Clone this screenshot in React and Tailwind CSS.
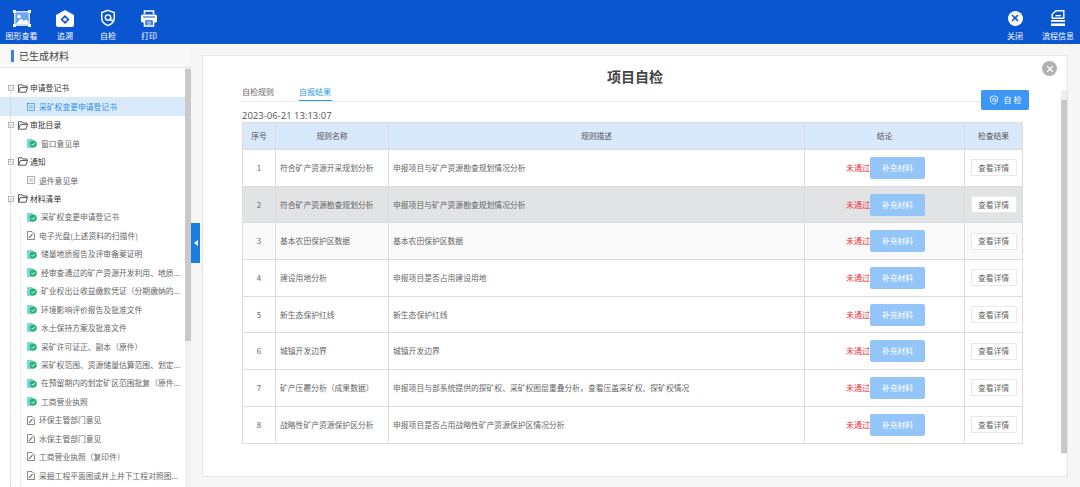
import React from 'react'
import { X } from 'lucide-react'

const FONT = 'font-["Noto_Sans_CJK_SC","Noto_Sans",sans-serif]'

const ShieldIcon = ({ className }) => (
  <svg viewBox="0 0 20 20" className={className} fill="none" stroke="currentColor" strokeWidth="1.6">
    <path d="M10 1.5 L17 4 V10 C17 14 13.5 17 10 18.5 C6.5 17 3 14 3 10 V4 Z" />
    <circle cx="10" cy="9.5" r="3" />
    <path d="M13 9.5 V12 C13 13 14.5 13 15.5 12" />
  </svg>
)

const ImageIcon = () => (
  <svg viewBox="0 0 18 17" className="w-[18px] h-[17px]" fill="none">
    <rect x="1" y="1" width="16" height="15" fill="#cfe1fa" />
    <rect x="2.5" y="2.5" width="13" height="12" fill="#6fa5ee" />
    <circle cx="6" cy="6.5" r="1.8" fill="#fff" />
    <path d="M2.5 14.5 L8 8.5 L11 11 L13 9.5 L15.5 12 V14.5 Z" fill="#fff" />
    <path d="M0 0h3v3h-3zM15 0h3v3h-3zM0 14h3v3h-3zM15 14h3v3h-3z" fill="#fff" />
  </svg>
)

const TraceIcon = () => (
  <svg viewBox="0 0 18 17" className="w-[18px] h-[17px]">
    <path d="M9 0 L18 5 V15 C18 16 17 17 16 17 H2 C1 17 0 16 0 15 V5 Z" fill="#fff" />
    <path d="M9 5 L13.5 9.5 L9 14 L4.5 9.5 Z" fill="#0a55d0" />
    <circle cx="9" cy="9.5" r="1.8" fill="#fff" />
  </svg>
)

const PrintIcon = () => (
  <svg viewBox="0 0 18 17" className="w-[18px] h-[17px]" fill="none" stroke="#fff" strokeWidth="1.6">
    <path d="M4.5 4 V1 H13.5 V4" />
    <rect x="1" y="4.5" width="16" height="8" rx="1.5" fill="#fff" stroke="none" />
    <path d="M3 7 H15" stroke="#0a55d0" strokeWidth="1" />
    <rect x="4.5" y="9.5" width="9" height="6.5" fill="#0a55d0" />
    <path d="M6.5 12 H11.5 M6.5 14 H11.5" strokeWidth="1" />
  </svg>
)

const FlowIcon = () => (
  <svg viewBox="0 0 14 16" className="w-[14px] h-[16px]">
    <path d="M5 0.7 H12.8 V8.3 H1.2 V4.2 Z" fill="none" stroke="#fff" strokeWidth="1.4" />
    <path d="M4.5 5 H10 V6.3 H4.5 Z" fill="#fff" />
    <rect x="0" y="10" width="14" height="1.8" fill="#fff" />
    <rect x="0" y="13.4" width="14" height="2.6" fill="#fff" />
  </svg>
)

const ToolItem = ({ icon, label, className }) => (
  <div className={`flex flex-col items-center ${className}`}>
    <div className="h-[18px] flex items-center justify-center">{icon}</div>
    <span className="text-[8px] leading-[11px] mt-[3px] whitespace-nowrap">{label}</span>
  </div>
)

const FolderIcon = () => (
  <svg viewBox="0 0 10 9" className="w-[10px] h-[9px] shrink-0" fill="none" stroke="#444" strokeWidth="0.9">
    <path d="M0.5 8.2 V0.8 H4 L5 2 H9 V3.6 M0.5 8.2 L2.2 3.6 H9.5 L8 8.2 Z" />
  </svg>
)

const MinusBox = () => (
  <svg viewBox="0 0 6 6" className="w-[6px] h-[6px] shrink-0" fill="none" stroke="#999" strokeWidth="0.7">
    <rect x="0.4" y="0.4" width="5.2" height="5.2" />
    <path d="M1.5 3 H4.5" />
  </svg>
)

const CheckDoc = () => (
  <svg viewBox="0 0 10 9" className="w-[10px] h-[9px] shrink-0">
    <path d="M0 0 H5 L7 2 V9 H0 Z" fill="#7fd6dd" />
    <circle cx="6.2" cy="5" r="3.6" fill="#22b573" />
    <path d="M4.5 5 L5.8 6.3 L8 3.9" fill="none" stroke="#fff" strokeWidth="0.9" />
  </svg>
)

const EditDoc = () => (
  <svg viewBox="0 0 8 9" className="w-[8px] h-[9px] shrink-0" fill="none" stroke="#555" strokeWidth="0.7">
    <path d="M0.5 0.5 H5 L7.5 3 V8.5 H0.5 Z" />
    <path d="M2 7 L5.5 3" strokeWidth="1.1" />
  </svg>
)

const PlainDoc = ({ color }) => (
  <svg viewBox="0 0 8 8" className="w-[8px] h-[8px] shrink-0" fill="none" stroke={color} strokeWidth="0.7">
    <rect x="0.5" y="0.5" width="7" height="7" />
    <path d="M2 3 H6 M2 5 H6" />
  </svg>
)

const tree = [
  { root: '申请登记书' },
  { label: '采矿权变更申请登记书', icon: 'sel', selected: true },
  { root: '审批目录' },
  { label: '窗口意见单', icon: 'check' },
  { root: '通知' },
  { label: '退件意见单', icon: 'plain' },
  { root: '材料清单' },
  { label: '采矿权变更申请登记书', icon: 'check' },
  { label: '电子光盘(上述资料的扫描件)', icon: 'edit' },
  { label: '储量地质报告及评审备案证明', icon: 'check' },
  { label: '经审查通过的矿产资源开发利用、地质...', icon: 'check' },
  { label: '矿业权出让收益缴款凭证（分期缴纳的...', icon: 'check' },
  { label: '环境影响评价报告及批准文件', icon: 'check' },
  { label: '水土保持方案及批准文件', icon: 'check' },
  { label: '采矿许可证正、副本（原件）', icon: 'check' },
  { label: '采矿权范围、资源储量估算范围、划定...', icon: 'check' },
  { label: '在预留期内的划定矿区范围批复（原件...', icon: 'check' },
  { label: '工商营业执照', icon: 'check' },
  { label: '环保主管部门意见', icon: 'edit' },
  { label: '水保主管部门意见', icon: 'edit' },
  { label: '工商营业执照（复印件）', icon: 'edit' },
  { label: '采掘工程平面图或井上井下工程对照图...', icon: 'edit' },
]

const TreeRow = ({ item }) => {
  if (item.root) {
    return (
      <div className="h-[18.45px] flex items-center pl-[8px] text-[#333]">
        <MinusBox />
        <span className="ml-[4px]"><FolderIcon /></span>
        <span className="ml-[2px]">{item.root}</span>
      </div>
    )
  }
  return (
    <div className={`h-[18.45px] flex items-center pl-[27px] whitespace-nowrap ${item.selected ? 'bg-[#d9ebfa] text-[#2f8fe6]' : 'text-[#666]'}`}>
      {item.icon === 'check' && <CheckDoc />}
      {item.icon === 'edit' && <EditDoc />}
      {item.icon === 'plain' && <PlainDoc color="#888" />}
      {item.icon === 'sel' && <PlainDoc color="#2f8fe6" />}
      <span className="ml-[4px]">{item.label}</span>
    </div>
  )
}

const rows = [
  ['符合矿产资源开采规划分析', '申报项目与矿产资源勘查规划情况分析'],
  ['符合矿产资源勘查规划分析', '申报项目与矿产资源勘查规划情况分析'],
  ['基本农田保护区数据', '基本农田保护区数据'],
  ['建设用地分析', '申报项目是否占用建设用地'],
  ['新生态保护红线', '新生态保护红线'],
  ['城镇开发边界', '城镇开发边界'],
  ['矿产压覆分析（成果数据）', '申报项目与部系统提供的探矿权、采矿权图层重叠分析，查看压盖采矿权、探矿权情况'],
  ['战略性矿产资源保护区分析', '申报项目是否占用战略性矿产资源保护区情况分析'],
]

const rowBg = (i) => {
  if (i === 1) return 'bg-[#e2e3e5]'
  if (i === 2) return 'bg-[#fafafa]'
  return 'bg-white'
}

const App = () => {
  return (
    <div className={`w-[1080px] h-[487px] overflow-hidden flex flex-col bg-[#f6f6f6] ${FONT}`}>
      {/* top bar */}
      <header className="h-[44px] shrink-0 bg-[#0a55d0] text-white flex items-start pt-[9px]">
        <ToolItem icon={<ImageIcon />} label="图形查看" className="w-[31px] ml-[6px]" />
        <ToolItem icon={<TraceIcon />} label="追溯" className="w-[18px] ml-[19px]" />
        <ToolItem icon={<ShieldIcon className="w-[18px] h-[18px]" />} label="自检" className="w-[18px] ml-[25px]" />
        <ToolItem icon={<PrintIcon />} label="打印" className="w-[18px] ml-[23px]" />
        <ToolItem
          icon={<div className="w-[15px] h-[15px] rounded-full bg-white flex items-center justify-center"><X className="w-[10px] h-[10px] text-[#0a55d0]" strokeWidth={4} /></div>}
          label="关闭"
          className="w-[16px] ml-auto"
        />
        <ToolItem icon={<FlowIcon />} label="流程信息" className="w-[32px] ml-[19px] mr-[6px]" />
      </header>

      <div className="flex-1 flex min-h-0 relative">
        {/* left panel */}
        <aside className="w-[191px] shrink-0 flex flex-col bg-white text-[7.8px]">
          <div className="h-[24px] shrink-0 flex items-center pl-[11px] bg-[#f8f8f8] border-b border-[#e6e6e6]">
            <span className="w-[3px] h-[12px] bg-[#2a86e0]" />
            <span className="ml-[5px] text-[10px] text-[#444]">已生成材料</span>
          </div>
          <div className="flex-1 flex min-h-0">
            <div className="w-[185px] pt-[11px] overflow-hidden relative">
              {tree.map((item, i) => <TreeRow item={item} key={i} />)}
              <div className="absolute left-[10px] top-[24px] bottom-0 border-l border-dotted border-[#ccc]" />
              <div className="absolute left-[20px] top-[150px] bottom-0 border-l border-dotted border-[#ddd]" />
            </div>
            <div className="w-[6px] bg-[#f1f1f1]">
              <div className="h-[272px] mt-[1px] bg-[#c9c9c9]" />
            </div>
          </div>
        </aside>

        {/* collapse handle */}
        <button className="w-[9px] h-[40px] self-start mt-[179px] bg-[#1a7fe0] flex items-center justify-center shrink-0">
          <svg viewBox="0 0 4 6" className="w-[4px] h-[6px]" fill="#fff"><path d="M4 0 V6 L0 3 Z" /></svg>
        </button>

        {/* main panel */}
        <main className="relative w-[866px] h-[422px] ml-[2px] mt-[11px] bg-white border border-[#e6e6e6] pl-[39px]">
          <h1 className="absolute left-0 right-0 top-[10px] text-center text-[14px] leading-[20px] font-bold text-[#444]">项目自检</h1>
          <button className="absolute right-[10px] top-[5px] w-[15px] h-[15px] rounded-full bg-[#b0b0b0] flex items-center justify-center">
            <X className="w-[10px] h-[10px] text-white" strokeWidth={3} />
          </button>
          <button className="absolute left-[778px] top-[34px] w-[48px] h-[20px] rounded-[2px] bg-[#3b96f5] text-white text-[8px] flex items-center justify-center gap-[5px]">
            <ShieldIcon className="w-[10px] h-[10px]" />
            <span>自 检</span>
          </button>
          <div className="absolute right-0 top-[34px] bottom-[22px] w-[6px] bg-[#eeeeee]">
            <div className="mt-[10px] h-[353px] bg-[#c9c9c9]" />
          </div>

          {/* tabs */}
          <div className="w-[739px] h-[46px] pt-[28px] flex items-start border-b border-[#e8e8e8] text-[8px] text-[#666]">
            <span className="w-[57px] leading-[16px]">自检规则</span>
            <span className="w-[33px] h-[17px] leading-[16px] text-[#2b9bd8] border-b border-[#2b9bd8]">自报结果</span>
          </div>
          <div className="h-[20px] text-[9.5px] leading-[28px] text-[#555] font-['Open_Sans',sans-serif]">2023-06-21 13:13:07</div>

          {/* result table */}
          <table className="w-[780px] table-fixed border-collapse text-[7.8px] text-[#666]">
            <thead>
              <tr className="h-[27px] bg-[#d8e9fb] text-[#555]">
                <th className="w-[33px] border border-[#dcdcdc] font-normal">序号</th>
                <th className="w-[113px] border border-[#dcdcdc] font-normal">规则名称</th>
                <th className="w-[416px] border border-[#dcdcdc] font-normal">规则描述</th>
                <th className="w-[160px] border border-[#dcdcdc] font-normal">结论</th>
                <th className="w-[58px] border border-[#dcdcdc] font-normal">检查结果</th>
              </tr>
            </thead>
            <tbody>
              {rows.map((r, i) => (
                <tr className={`h-[36.7px] ${rowBg(i)}`} key={i}>
                  <td className="border border-[#dcdcdc] text-center">{i + 1}</td>
                  <td className="border border-[#dcdcdc] pl-[4px] whitespace-nowrap">{r[0]}</td>
                  <td className="border border-[#dcdcdc] pl-[4px] whitespace-nowrap">{r[1]}</td>
                  <td className="border border-[#dcdcdc]">
                    <div className="flex items-center justify-center pl-[2px]">
                      <span className="text-[8px] text-[#e8323c]">未通过</span>
                      <span className="w-[55px] h-[22px] rounded-[2px] bg-[#94c5f8] text-white flex items-center justify-center">补充材料</span>
                    </div>
                  </td>
                  <td className="border border-[#dcdcdc]">
                    <div className="w-[46px] h-[17px] mx-auto border border-[#e8e8e8] rounded-[1px] bg-white flex items-center justify-center text-[#666]">查看详情</div>
                  </td>
                </tr>
              ))}
            </tbody>
          </table>
        </main>
      </div>
    </div>
  )
}

export default App
